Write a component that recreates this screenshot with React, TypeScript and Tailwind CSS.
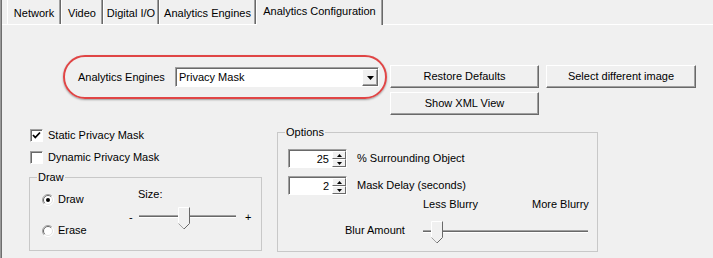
import React from "react";

const Tab = ({ label, w, active }: { label: string; w: string; active?: boolean }) =>
  active ? (
    <div className={`${w} h-[25px] relative z-10 flex justify-center pt-[5px] bg-[#f0f0f0] border-l border-l-white border-r border-r-[#696969] shadow-[inset_-1px_0_0_#a0a0a0]`}>
      {label}
    </div>
  ) : (
    <div className={`${w} h-[24px] flex justify-center pt-[7px] border-l border-l-white border-r border-r-[#696969] shadow-[inset_-1px_0_0_#a0a0a0]`}>
      {label}
    </div>
  );

const Btn = ({ children }: { children: React.ReactNode }) => (
  <div className="h-[23px] flex items-center justify-center bg-[#f0f0f0] border border-t-white border-l-white border-r-[#696969] border-b-[#696969] shadow-[inset_-1px_-1px_0_#a0a0a0]">
    {children}
  </div>
);

const CheckBox = ({ checked }: { checked?: boolean }) => (
  <div className="w-[13px] h-[13px] bg-white border border-t-[#a0a0a0] border-l-[#a0a0a0] border-r-white border-b-white shadow-[inset_1px_1px_0_#696969] flex items-center justify-center">
    {checked && (
      <svg width="11" height="11" viewBox="0 0 11 11">
        <polyline points="2,5 4.3,7.5 9,2.5" fill="none" stroke="#000" strokeWidth="1.8" />
      </svg>
    )}
  </div>
);

const Radio = ({ checked }: { checked?: boolean }) => (
  <svg width="12" height="12" viewBox="0 0 12 12">
    <circle cx="6" cy="6" r="5.5" fill="#fff" />
    <path d="M2.1 9.9 A5.5 5.5 0 0 1 9.9 2.1" fill="none" stroke="#a0a0a0" />
    <path d="M9.9 2.1 A5.5 5.5 0 0 1 2.1 9.9" fill="none" stroke="#ffffff" />
    <path d="M2.8 9.2 A4.5 4.5 0 0 1 9.2 2.8" fill="none" stroke="#696969" />
    <path d="M9.2 2.8 A4.5 4.5 0 0 1 2.8 9.2" fill="none" stroke="#e3e3e3" />
    {checked && <circle cx="6" cy="6" r="2" fill="#000" />}
  </svg>
);

const SpinBtn = ({ up }: { up?: boolean }) => (
  <div className="flex-1 flex items-center justify-center bg-[#f0f0f0] border border-t-white border-l-white border-r-[#696969] border-b-[#696969]">
    <svg width="5" height="3" viewBox="0 0 5 3">
      {up ? <polygon points="2.5,0 5,3 0,3" fill="#000" /> : <polygon points="0,0 5,0 2.5,3" fill="#000" />}
    </svg>
  </div>
);

const Spin = ({ value }: { value: string }) => (
  <div className="w-[59px] h-[19px] flex bg-white border border-t-[#a0a0a0] border-l-[#a0a0a0] border-r-white border-b-white shadow-[inset_1px_1px_0_#696969]">
    <div className="flex-1 text-right pr-[3px] pt-[3px]">{value}</div>
    <div className="w-[14px] flex flex-col pt-[1px] pb-0 pr-0">
      <SpinBtn up />
      <SpinBtn />
    </div>
  </div>
);

export default function App() {
  return (
    <div className="w-[713px] h-[258px] flex bg-[#f0f0f0] overflow-hidden font-['Liberation_Sans',Arial,sans-serif] text-[11px] leading-[13px] text-black">
      <div className="w-[2px] border-l border-l-[#9a9a9a] bg-[#6e6e6e]" />
      <div className="flex-1 flex flex-col">
        {/* Tabs */}
        <div className="flex h-[24px] pl-[5px] items-start">
          <Tab label="Network" w="w-[54px]" />
          <Tab label="Video" w="w-[42px]" />
          <Tab label="Digital I/O" w="w-[56px]" />
          <Tab label="Analytics Engines" w="w-[97px]" />
          <Tab label="Analytics Configuration" w="w-[127px]" active />
        </div>

        {/* Panel */}
        <div className="flex-1 border-t border-t-white flex flex-col">
          {/* Row A */}
          <div className="flex mt-[30px] pl-[61px] items-start">
            <div className="w-[324px] h-[44px] rounded-full border-2 border-[#e04545] shadow-[0_1px_2px_rgba(0,0,0,0.35)] flex items-center justify-between pl-[13px] pr-[6px]">
              <span>Analytics Engines</span>
              <div className="w-[204px] h-[20px] flex bg-white border border-t-[#a0a0a0] border-l-[#a0a0a0] border-r-white border-b-white shadow-[inset_1px_1px_0_#696969]">
                <div className="flex-1 pl-[3px] pt-[3px]">Privacy Mask</div>
                <div className="w-[16px] mt-[1px] mb-0 flex items-center justify-center bg-[#f0f0f0] border border-t-white border-l-white border-r-[#696969] border-b-[#696969] shadow-[inset_-1px_-1px_0_#a0a0a0]">
                  <svg width="7" height="4" viewBox="0 0 7 4">
                    <polygon points="0,0 7,0 3.5,4" fill="#000" />
                  </svg>
                </div>
              </div>
            </div>
            <div className="ml-[3px] mt-[10px] grid grid-cols-[149px_150px] gap-x-[7px] gap-y-[4px]">
              <Btn>Restore Defaults</Btn>
              <Btn>Select different image</Btn>
              <Btn>Show XML View</Btn>
            </div>
          </div>

          {/* Row B */}
          <div className="flex mt-[9px] pl-[27px] items-start">
            {/* Left column */}
            <div className="w-[233px] flex flex-col">
              <div className="h-[22px] flex items-center pl-[1px] gap-[5px]">
                <CheckBox checked />
                <span>Static Privacy Mask</span>
              </div>
              <div className="h-[22px] flex items-center pl-[1px] gap-[5px]">
                <CheckBox />
                <span>Dynamic Privacy Mask</span>
              </div>
              <fieldset className="mt-[3px] h-[80px] border border-[#c8c8c8]">
                <legend className="ml-[7px] px-[1px]">Draw</legend>
                <div className="flex">
                  <div className="w-[99px] pl-[12px] flex flex-col">
                    <div className="mt-[9px] h-[13px] flex items-center gap-[4px]">
                      <Radio checked />
                      <span>Draw</span>
                    </div>
                    <div className="mt-[18px] h-[13px] flex items-center gap-[4px]">
                      <Radio />
                      <span>Erase</span>
                    </div>
                  </div>
                  <div className="flex flex-col">
                    <div className="mt-[4px] h-[13px] pl-[9px]">Size:</div>
                    <div className="mt-[3px] h-[26px] flex items-center">
                      <span className="w-[10px]">-</span>
                      <svg width="100" height="26" viewBox="0 0 100 26">
                        <rect x="0" y="11" width="97" height="1" fill="#a0a0a0" />
                        <rect x="0" y="12" width="97" height="1" fill="#696969" />
                        <rect x="0" y="13" width="97" height="1" fill="#ffffff" />
                        <polygon points="39.5,3.5 50.5,3.5 50.5,19.5 45,25 39.5,19.5" fill="#f0f0f0" />
                        <polyline points="39.5,19.5 39.5,3.5 50.5,3.5" fill="none" stroke="#ffffff" />
                        <polyline points="50.5,3.5 50.5,19.5 45,25" fill="none" stroke="#696969" />
                        <polyline points="45,25 39.5,19.5" fill="none" stroke="#a0a0a0" />
                      </svg>
                      <span className="ml-[6px]">+</span>
                    </div>
                  </div>
                </div>
              </fieldset>
            </div>

            {/* Options */}
            <fieldset className="ml-[15px] mt-[2px] w-[321px] h-[126px] border border-[#c8c8c8]">
              <legend className="ml-[7px] px-[1px]">Options</legend>
              <div className="flex flex-col">
                <div className="mt-[10px] pl-[10px] flex flex-col gap-[8px]">
                  <div className="flex items-center">
                    <Spin value="25" />
                    <span className="ml-[10px]">% Surrounding Object</span>
                  </div>
                  <div className="flex items-center">
                    <Spin value="2" />
                    <span className="ml-[10px]">Mask Delay (seconds)</span>
                  </div>
                </div>
                <div className="mt-[3px] h-[13px] flex pl-[145px]">
                  <span className="w-[109px]">Less Blurry</span>
                  <span>More Blurry</span>
                </div>
                <div className="mt-[9px] h-[24px] flex items-start pl-[67px]">
                  <span className="w-[78px] mt-[4px]">Blur Amount</span>
                  <svg width="170" height="24" viewBox="0 0 170 24">
                    <rect x="0" y="10" width="165" height="1" fill="#a0a0a0" />
                    <rect x="0" y="11" width="165" height="1" fill="#696969" />
                    <rect x="0" y="12" width="165" height="1" fill="#ffffff" />
                    <polygon points="8.5,1.5 19.5,1.5 19.5,17.5 14,23 8.5,17.5" fill="#f0f0f0" />
                    <polyline points="8.5,17.5 8.5,1.5 19.5,1.5" fill="none" stroke="#ffffff" />
                    <polyline points="19.5,1.5 19.5,17.5 14,23" fill="none" stroke="#696969" />
                    <polyline points="14,23 8.5,17.5" fill="none" stroke="#a0a0a0" />
                  </svg>
                </div>
              </div>
            </fieldset>
          </div>
        </div>
      </div>
    </div>
  );
}
